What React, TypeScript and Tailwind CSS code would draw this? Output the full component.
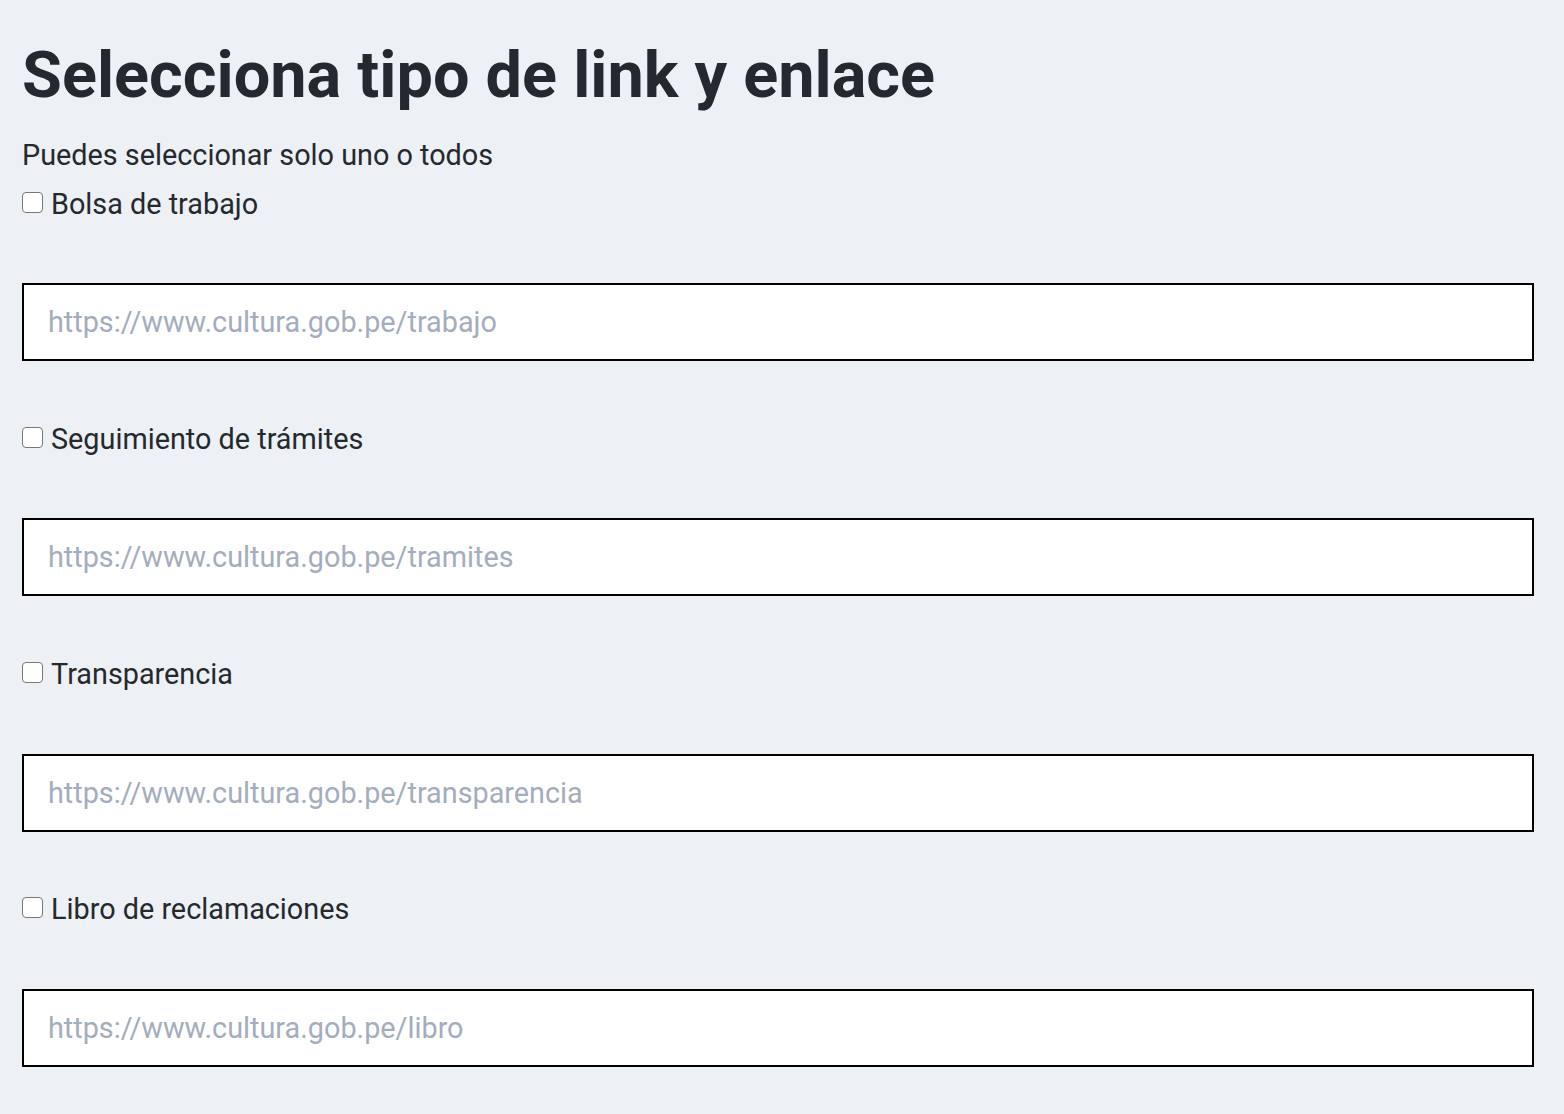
import React, { useState } from "react";

const links = [
  { label: "Bolsa de trabajo", placeholder: "https://www.cultura.gob.pe/trabajo" },
  { label: "Seguimiento de trámites", placeholder: "https://www.cultura.gob.pe/tramites" },
  { label: "Transparencia", placeholder: "https://www.cultura.gob.pe/transparencia" },
  { label: "Libro de reclamaciones", placeholder: "https://www.cultura.gob.pe/libro" },
];

const App = () => {
  const [checked, setChecked] = useState<boolean[]>([false, false, false, false]);
  const [urls, setUrls] = useState<string[]>(["", "", "", ""]);

  const toggle = (i: number) => {
    const next = [...checked];
    next[i] = !next[i];
    setChecked(next);
  };

  const handleInputChange = (i: number, e: React.ChangeEvent<HTMLInputElement>) => {
    const next = [...urls];
    next[i] = e.target.value;
    setUrls(next);
  };

  return (
    <div className="min-h-screen bg-[#edf0f5] pl-[22px] pr-[30px] pt-[35px] pb-[47px] text-[#24292e] font-['Roboto',sans-serif]">
      <h1 className="text-[64.8px] leading-[80px] font-bold text-[#25282e]">
        Selecciona tipo de link y enlace
      </h1>
      <p className="mt-[19px] text-[28.8px] leading-[42px]">Puedes seleccionar solo uno o todos</p>
      <div className="flex flex-col mt-[5px]">
        {links.map((item, i) => (
          <div key={item.label} className="flex flex-col mb-[55.33px] last:mb-0">
            <label className="flex items-center h-[42px] gap-[8px] cursor-pointer">
              <input
                type="checkbox"
                checked={checked[i]}
                onChange={() => toggle(i)}
                className="appearance-none w-[21px] h-[21px] shrink-0 rounded-[4px] border-[1.5px] border-[#777] bg-white checked:bg-[#0075ff] checked:border-[#0075ff]"
              />
              <span className="text-[28.8px] leading-[42px] mt-[3px]">{item.label}</span>
            </label>
            <input
              type="text"
              value={urls[i]}
              onChange={(e) => handleInputChange(i, e)}
              placeholder={item.placeholder}
              className="mt-[60px] w-full h-[78px] border-2 border-black bg-white px-[24px] text-[28.8px] text-[#24292e] placeholder:text-[#a3adbd] outline-none"
            />
          </div>
        ))}
      </div>
    </div>
  );
};

export default App;
